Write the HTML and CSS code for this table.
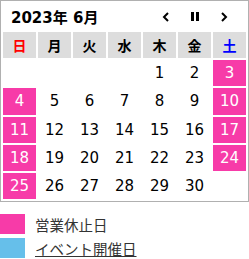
FILE: index.html
```html
<!DOCTYPE html>
<html lang="ja">
<head>
<meta charset="utf-8">
<link rel="stylesheet" href="styles.css">
</head>
<body>
<div class="cal">
  <div class="cal-head">
    <div class="cal-title">2023年 6月</div>
    <div class="cal-nav">
      <span class="nav-btn"><svg width="8" height="10" viewBox="0 0 8 10"><path d="M6 1 L2 5 L6 9" fill="none" stroke="#000" stroke-width="2"/></svg></span>
      <span class="nav-btn"><svg width="8" height="9" viewBox="0 0 8 9"><rect x="0" y="0" width="3" height="9" fill="#000"/><rect x="5" y="0" width="3" height="9" fill="#000"/></svg></span>
      <span class="nav-btn"><svg width="8" height="10" viewBox="0 0 8 10"><path d="M2 1 L6 5 L2 9" fill="none" stroke="#000" stroke-width="2"/></svg></span>
    </div>
  </div>
  <table class="cal-grid">
    <thead>
      <tr>
        <th class="sun">日</th><th>月</th><th>火</th><th>水</th><th>木</th><th>金</th><th class="sat">土</th>
      </tr>
    </thead>
    <tbody>
      <tr><td></td><td></td><td></td><td></td><td>1</td><td>2</td><td class="off">3</td></tr>
      <tr><td class="off">4</td><td>5</td><td>6</td><td>7</td><td>8</td><td>9</td><td class="off">10</td></tr>
      <tr><td class="off">11</td><td>12</td><td>13</td><td>14</td><td>15</td><td>16</td><td class="off">17</td></tr>
      <tr><td class="off">18</td><td>19</td><td>20</td><td>21</td><td>22</td><td>23</td><td class="off">24</td></tr>
      <tr><td class="off">25</td><td>26</td><td>27</td><td>28</td><td>29</td><td>30</td><td></td></tr>
    </tbody>
  </table>
</div>
<ul class="legend">
  <li class="legend-item"><span class="swatch swatch-off"></span><span class="legend-text">営業休止日</span></li>
  <li class="legend-item"><span class="swatch swatch-event"></span><a class="legend-text legend-link">イベント開催日</a></li>
</ul>
</body>
</html>
```

FILE: styles.css
```css
html, body {
  margin: 0;
  padding: 0;
  background: #fff;
}
body {
  font-family: "DejaVu Sans", "Noto Sans CJK JP", sans-serif;
  color: #000;
  width: 249px;
}
.cal {
  border: 1px solid #b0b0b0;
  width: 247px;
}
.cal-head {
  height: 29px;
  display: flex;
  align-items: center;
  justify-content: space-between;
}
.cal-title {
  font-size: 15px;
  font-weight: bold;
  padding-left: 10px;
  padding-top: 2px;
}
.cal-nav {
  display: flex;
  align-items: center;
  gap: 21px;
  padding-right: 20px;
  padding-top: 2px;
}
.nav-btn {
  display: flex;
  width: 8px;
  height: 10px;
  align-items: center;
  justify-content: center;
}
.cal-grid {
  width: 247px;
  border-collapse: separate;
  border-spacing: 2px;
  table-layout: fixed;
}
.cal-grid th {
  background: #dddddd;
  height: 26px;
  padding: 0;
  font-size: 14px;
  font-weight: bold;
  text-align: center;
  width: 33px;
}
.cal-grid th.sun { color: #ff0000; }
.cal-grid th.sat { color: #0000ff; }
.cal-grid td {
  height: 26.3px;
  padding: 0;
  font-size: 15px;
  text-align: center;
  color: #000;
}
.cal-grid td.off {
  background: #f73ba8;
  color: #fff;
}
.legend {
  list-style: none;
  margin: 12px 0 0 0;
  padding: 0;
  display: flex;
  flex-direction: column;
  gap: 4px;
}
.legend-item {
  display: flex;
  align-items: center;
  height: 20px;
}
.swatch {
  width: 25px;
  height: 20px;
  margin-right: 10px;
}
.swatch-off { background: #f73ba8; }
.swatch-event { background: #66bfea; height: 21px; }
.legend-text {
  font-size: 14.5px;
  color: #333;
}
.legend-link {
  text-decoration: underline;
  color: #333;
}
```
